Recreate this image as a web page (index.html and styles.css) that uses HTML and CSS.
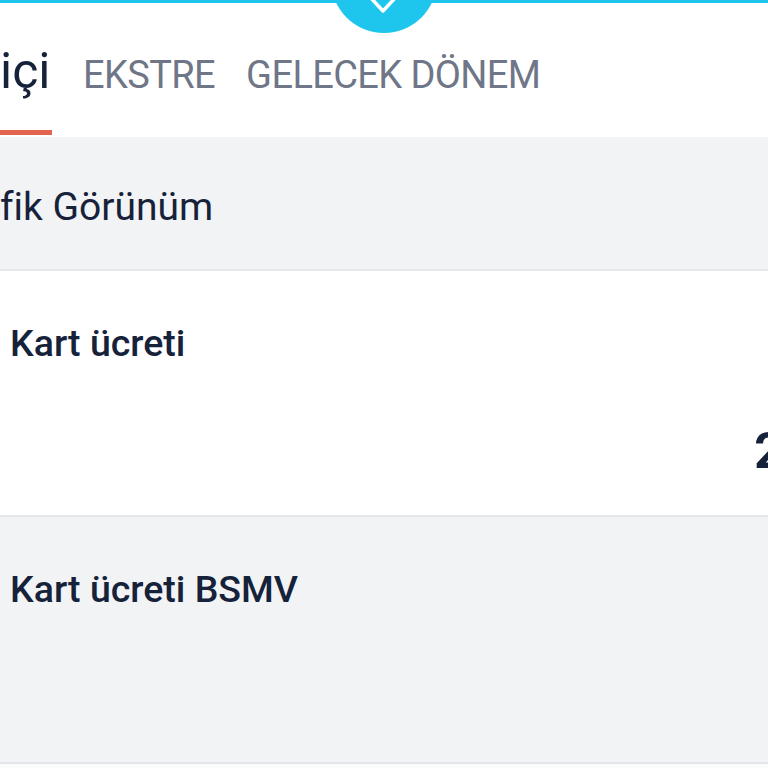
FILE: index.html
```html
<!DOCTYPE html>
<html lang="tr">
<head>
<meta charset="utf-8">
<title>Dönem içi</title>
<link rel="stylesheet" href="styles.css">
</head>
<body>
<div class="screen">
  <header class="header">
    <div class="pull-tab" aria-hidden="true">
      <svg class="chevron" viewBox="0 0 40 20" width="40" height="20">
        <polyline points="6,1 19,15 32,1" fill="none" stroke="#ffffff" stroke-width="3.5" stroke-linecap="round" stroke-linejoin="round"/>
      </svg>
    </div>
    <nav class="tabs">
      <span class="tab tab-active">içi</span>
      <span class="tab">EKSTRE</span>
      <span class="tab">GELECEK DÖNEM</span>
    </nav>
  </header>
  <section class="row row-grey row-view">
    <span class="view-title">fik Görünüm</span>
  </section>
  <section class="row row-white row-item">
    <div class="item-title">Kart ücreti</div>
    <div class="item-amount"><span class="amount">2</span></div>
  </section>
  <section class="row row-grey row-item">
    <div class="item-title">Kart ücreti BSMV</div>
  </section>
  <div class="tail"></div>
</div>
</body>
</html>
```

FILE: styles.css
```css
* {
  box-sizing: border-box;
}

html, body {
  margin: 0;
  padding: 0;
  width: 768px;
  height: 768px;
  overflow: hidden;
  background: #fafbfb;
  font-family: Roboto, "Noto Sans", "Liberation Sans", sans-serif;
}

.screen {
  width: 768px;
  overflow: hidden;
}

.header {
  position: relative;
  height: 137px;
  background: #ffffff;
  border-top: 3px solid #1ec6ee;
}

.pull-tab {
  position: absolute;
  left: 331px;
  top: -76px;
  width: 106px;
  height: 106px;
  border-radius: 50%;
  background: #1ec6ee;
  display: flex;
  align-items: flex-end;
  justify-content: center;
  padding-bottom: 17px;
}

.chevron {
  display: block;
}

.tabs {
  display: flex;
  align-items: baseline;
  gap: 31px;
  padding-top: 43px;
}

.tab {
  font-size: 38px;
  line-height: 38px;
  letter-spacing: -0.6px;
  color: #6e7688;
  white-space: nowrap;
}

.tab-active {
  font-size: 50px;
  line-height: 50px;
  letter-spacing: 0;
  color: #16223a;
  width: 52px;
  padding-bottom: 34px;
  border-bottom: 5px solid #e2634e;
}

.row {
  overflow: hidden;
}

.row-grey {
  background: #f2f3f5;
}

.row-white {
  background: #ffffff;
}

.row-view {
  height: 134px;
  padding-top: 51px;
  border-bottom: 2px solid #e7e8ea;
}

.view-title {
  display: block;
  font-size: 39px;
  line-height: 38px;
  color: #16223a;
  white-space: nowrap;
}

.row-item {
  height: 246px;
  padding-top: 54px;
  padding-left: 10px;
  border-bottom: 2px solid #e4e5e8;
}

.row-grey.row-item {
  height: 247px;
}

.item-title {
  font-size: 37.5px;
  line-height: 36px;
  font-weight: 500;
  color: #16223a;
  white-space: nowrap;
}

.item-amount {
  display: flex;
  justify-content: flex-end;
  margin-top: 65px;
  margin-right: -15px;
}

.amount {
  font-size: 50px;
  line-height: 50px;
  font-weight: 700;
  color: #16223a;
}

.tail {
  height: 20px;
  background: #fafbfb;
}
```
